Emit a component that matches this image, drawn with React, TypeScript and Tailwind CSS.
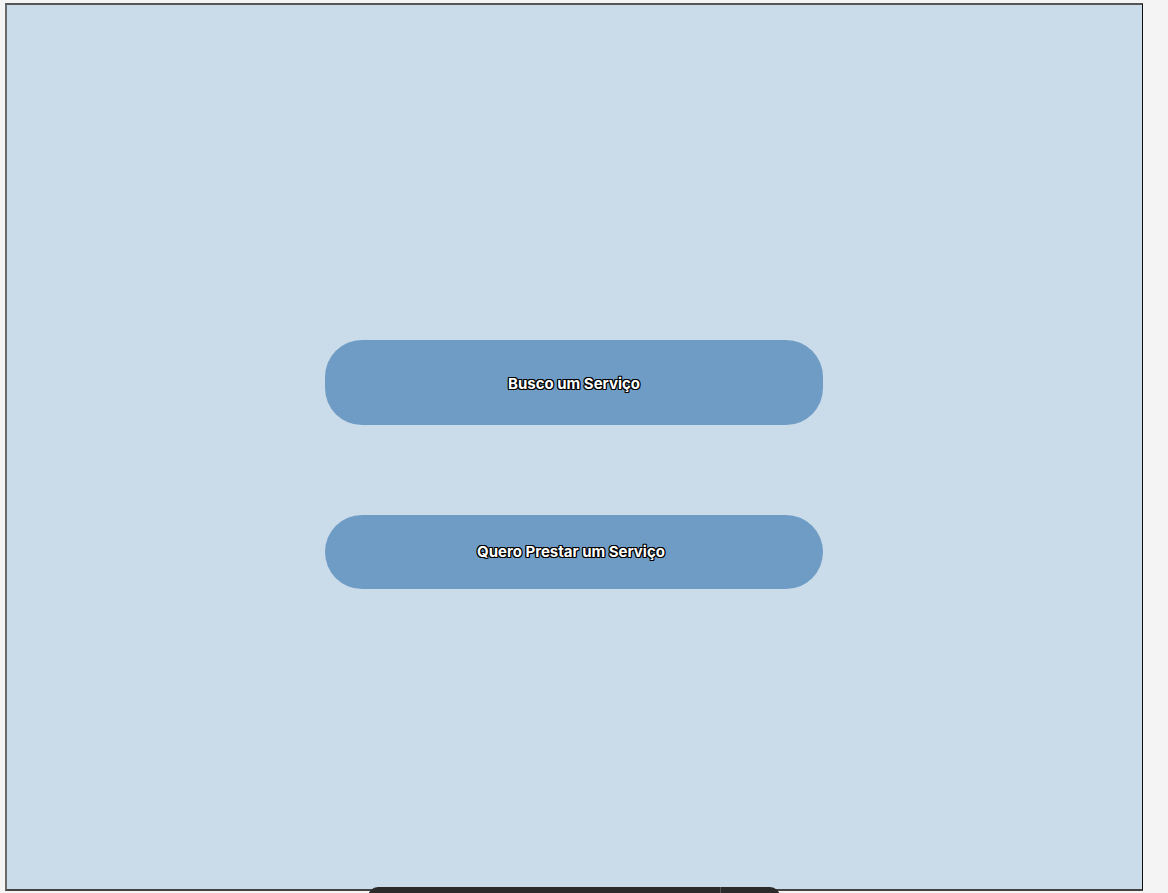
import React from "react";

export default function App() {
  const outline =
    "[text-shadow:1px_0_0_#000,-1px_0_0_#000,0_1px_0_#000,0_-1px_0_#000,1px_1px_0_#000,-1px_-1px_0_#000,1px_-1px_0_#000,-1px_1px_0_#000]";
  return (
    <div className="relative h-[893px] w-full overflow-hidden bg-[#f4f4f4] font-['Inter',sans-serif]">
      <div className="ml-[5px] mt-[3px] flex h-[888px] w-[1138px] flex-col items-center border-t-2 border-r border-b-2 border-l-2 border-t-[#555555] border-r-[#111111] border-b-[#444444] border-l-[#6a6a6a] bg-[#cadbe9] pr-[1px] pt-[335px]">
        <button
          className={`flex h-[85px] w-[498px] items-center justify-center rounded-[37px] bg-[#6f9cc5] pt-[3px] text-[15px] font-bold text-white ${outline}`}
        >
          Busco um Serviço
        </button>
        <button
          className={`mt-[90px] flex h-[74px] w-[498px] items-center justify-center rounded-[37px] bg-[#6f9cc5] pr-[6px] pt-[1px] text-[15px] font-bold text-white ${outline}`}
        >
          Quero Prestar um Serviço
        </button>
      </div>
      <div className="absolute left-[368px] top-[887px] flex h-[20px] w-[412px] rounded-t-[10px] bg-[#2b2b2b]">
        <div className="ml-[352px] h-full w-px bg-[#555555]" />
      </div>
    </div>
  );
}
